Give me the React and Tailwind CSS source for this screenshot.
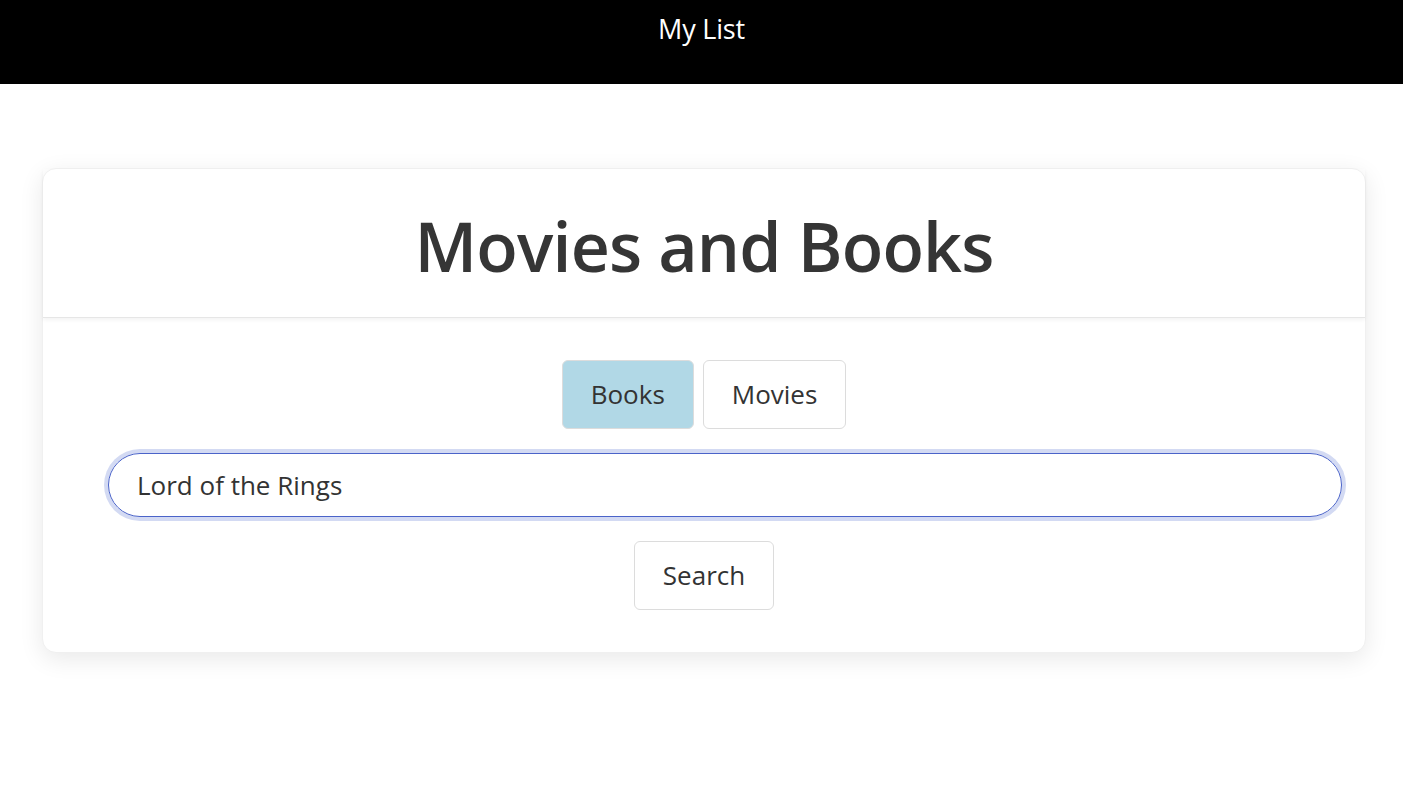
import React, { useState, useEffect, useRef } from 'react';

export default function App() {
  const [mode, setMode] = useState('Books');
  const [query, setQuery] = useState('Lord of the Rings');
  const inputRef = useRef(null);

  useEffect(() => {
    const el = inputRef.current;
    if (el) {
      el.focus();
      el.setSelectionRange(el.value.length, el.value.length);
    }
  }, []);

  return (
    <div className="min-h-screen bg-white font-['Open_Sans',sans-serif] text-[#333]">
      <nav className="h-[84px] bg-black flex justify-center pt-[11px]">
        <span className="text-white text-[27px] leading-[36px] tracking-[-0.2px]">My List</span>
      </nav>

      <div className="pl-[42px] pt-[84px]">
        <div className="w-[1324px] bg-white rounded-[14px] shadow-[0_6px_24px_rgba(0,0,0,0.09)] border border-[#f0f0f0]">
          <div className="h-[149px] flex items-center justify-center border-b border-[#e6e6e6] shadow-[0_2px_4px_rgba(0,0,0,0.05)]">
            <h1 className="text-[68px] font-semibold tracking-[-0.8px] text-[#353535] leading-none pt-[6px]">
              Movies and Books
            </h1>
          </div>

          <div className="flex flex-col items-center pt-[42px] pb-[42px]">
            <div className="flex gap-[9px]">
              {['Books', 'Movies'].map((m) => (
                <button
                  key={m}
                  type="button"
                  onClick={() => setMode(m)}
                  className={`h-[69px] px-[28px] rounded-[6px] border border-[#dcdcdc] text-[26px] text-[#333] ${
                    mode === m ? 'bg-[#b1d8e6]' : 'bg-white'
                  }`}
                >
                  {m}
                </button>
              ))}
            </div>

            <div className="w-full pl-[65px] pr-[23px] mt-[24px]">
              <input
                ref={inputRef}
                value={query}
                onChange={(e) => setQuery(e.target.value)}
                className="w-full h-[64px] rounded-full border border-[#4a63c9] ring-4 ring-[#d3daf3] outline-none px-[28px] text-[26px] text-[#333] caret-black"
              />
            </div>

            <button
              type="button"
              className="mt-[24px] h-[69px] px-[28px] rounded-[6px] border border-[#dcdcdc] bg-white text-[26px] text-[#333]"
            >
              Search
            </button>
          </div>
        </div>
      </div>
    </div>
  );
}
